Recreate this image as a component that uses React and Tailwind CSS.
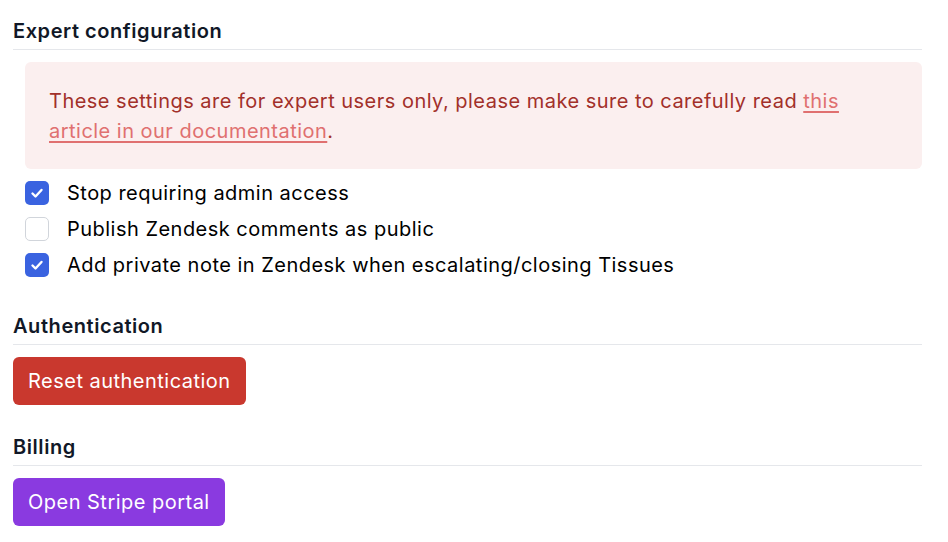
import React, { useState } from 'react';

function Checkbox({ checked, onChange }) {
  return (
    <button
      onClick={onChange}
      className={`flex items-center justify-center w-6 h-6 rounded-[5px] shrink-0 ${
        checked ? 'bg-[#3a63e0]' : 'bg-white border border-[#d1d5db]'
      }`}
    >
      {checked && (
        <svg viewBox="0 0 16 16" className="w-4 h-4" fill="none">
          <path d="M3.5 8.5l3 3 6-6.5" stroke="white" strokeWidth="2.4" strokeLinecap="round" strokeLinejoin="round" />
        </svg>
      )}
    </button>
  );
}

function SectionHeading({ children }) {
  return (
    <div className="border-b border-[#e5e7eb] pb-1">
      <h2 className="text-[20px] leading-[28px] font-semibold tracking-[0.028em] text-[#111827]">{children}</h2>
    </div>
  );
}

export default function App() {
  const [options, setOptions] = useState([
    { id: 'admin', label: 'Stop requiring admin access', checked: true },
    { id: 'public', label: 'Publish Zendesk comments as public', checked: false },
    { id: 'note', label: 'Add private note in Zendesk when escalating/closing Tissues', checked: true },
  ]);

  const toggle = (id) =>
    setOptions(options.map((o) => (o.id === id ? { ...o, checked: !o.checked } : o)));

  return (
    <div className="bg-white min-h-screen pl-[13px] pr-[26px] pt-[17px] font-['Inter',sans-serif] tracking-[0.03em] antialiased">
      {/* Expert configuration */}
      <div>
        <SectionHeading>Expert configuration</SectionHeading>
        <div className="ml-3 mt-3 rounded-md bg-[#fbefef] px-6 pt-6 pb-[23px] text-[20px] leading-[30px] text-[#a2302a]">
          These settings are for expert users only, please make sure to carefully read{' '}
          <a href="#" className="text-[#e07070] underline underline-offset-[3px]">
            this article in our documentation
          </a>
          .
        </div>
        <div className="ml-3 mt-1.5 flex flex-col">
          {options.map((o) => (
            <label key={o.id} className="flex items-center h-9 gap-[18px] cursor-pointer">
              <Checkbox checked={o.checked} onChange={() => toggle(o.id)} />
              <span className="text-[20px] text-black">{o.label}</span>
            </label>
          ))}
        </div>
      </div>

      {/* Authentication */}
      <div className="mt-[29px]">
        <SectionHeading>Authentication</SectionHeading>
        <button className="mt-3 rounded-md bg-[#c9382e] px-[15px] py-2.5 text-[20px] leading-[28px] text-white">
          Reset authentication
        </button>
      </div>

      {/* Billing */}
      <div className="mt-7">
        <SectionHeading>Billing</SectionHeading>
        <button className="mt-3 rounded-md bg-[#8a3ae0] px-[15px] py-2.5 text-[20px] leading-[28px] text-white">
          Open Stripe portal
        </button>
      </div>
    </div>
  );
}
